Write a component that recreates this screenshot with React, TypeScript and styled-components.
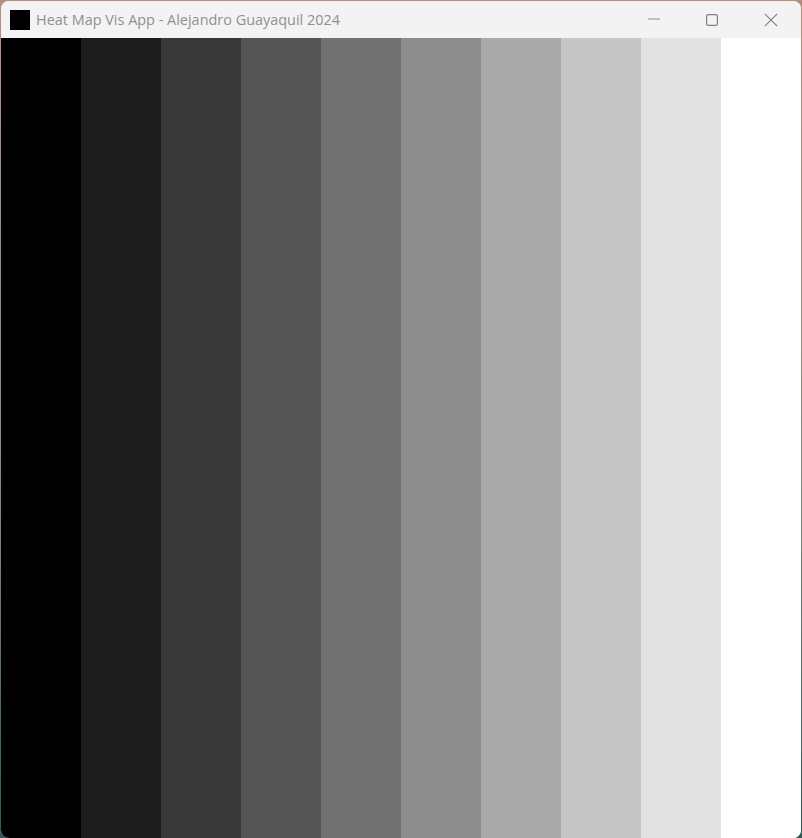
import React from "react";
import styled, { createGlobalStyle } from "styled-components";

const GlobalStyle = createGlobalStyle`
  html, body {
    margin: 0;
    padding: 0;
    height: 100%;
    overflow: hidden;
  }
`;

const Desktop = styled.div`
  width: 802px;
  height: 838px;
  padding: 1px 1px 0 1px;
  box-sizing: border-box;
  background: linear-gradient(180deg, #b58d7f 0%, #7d8a80 60%, #2f5a55 100%);
`;

const Window = styled.div`
  width: 800px;
  height: 837px;
  display: flex;
  flex-direction: column;
  border-radius: 8px;
  overflow: hidden;
  background: #f3f3f3;
`;

const TitleBar = styled.div`
  height: 37px;
  flex: none;
  display: flex;
  align-items: center;
  background: #f3f3f3;
`;

const AppIcon = styled.div`
  width: 20px;
  height: 20px;
  margin-left: 9px;
  margin-right: 6px;
  flex: none;
  background: #000;
`;

const Title = styled.div`
  flex: 1;
  font-family: "Open Sans", "Noto Sans", sans-serif;
  font-size: 14.45px;
  line-height: 20px;
  color: #909090;
  white-space: nowrap;
`;

const Controls = styled.div`
  display: grid;
  grid-template-columns: 58px 58px 60px;
  height: 100%;
`;

const ControlButton = styled.div`
  display: flex;
  align-items: center;
  justify-content: center;
`;

const Heatmap = styled.div`
  flex: 1;
  display: grid;
  grid-template-columns: repeat(10, 80px);
`;

const Bar = styled.div<{ $shade: string }>`
  background: ${(p) => p.$shade};
`;

const shades = [
  "#000000",
  "#1c1c1c",
  "#383838",
  "#555555",
  "#717171",
  "#8d8d8d",
  "#aaaaaa",
  "#c6c6c6",
  "#e2e2e2",
  "#ffffff",
];

const App: React.FC = () => {
  return (
    <Desktop>
      <GlobalStyle />
      <Window>
        <TitleBar>
          <AppIcon />
          <Title>Heat Map Vis App - Alejandro Guayaquil 2024</Title>
          <Controls>
            <ControlButton>
              <svg width="12" height="12" viewBox="0 0 12 12">
                <path d="M0 5H12" stroke="#8e8e8e" strokeWidth="1.1" fill="none" />
              </svg>
            </ControlButton>
            <ControlButton>
              <svg width="12" height="12" viewBox="0 0 12 12">
                <rect x="0.6" y="0.6" width="10.8" height="10.8" rx="1.5" stroke="#7f7f7f" strokeWidth="1.2" fill="none" />
              </svg>
            </ControlButton>
            <ControlButton>
              <svg width="14" height="14" viewBox="0 0 14 14">
                <path d="M0.8 0.8L13.2 13.2M13.2 0.8L0.8 13.2" stroke="#7f7f7f" strokeWidth="1.1" fill="none" />
              </svg>
            </ControlButton>
          </Controls>
        </TitleBar>
        <Heatmap>
          {shades.map((shade) => (
            <Bar key={shade} $shade={shade} />
          ))}
        </Heatmap>
      </Window>
    </Desktop>
  );
};

export default App;
